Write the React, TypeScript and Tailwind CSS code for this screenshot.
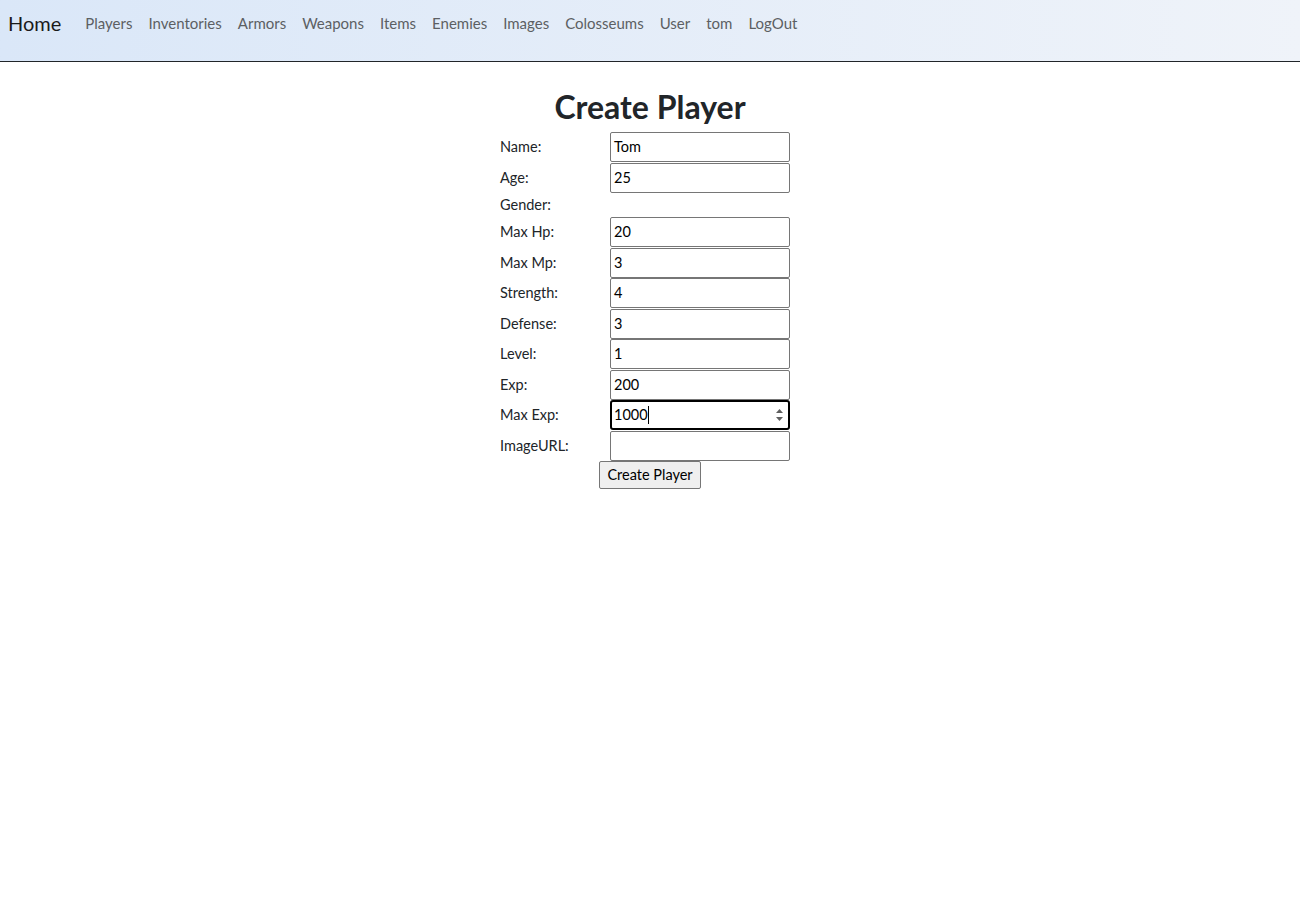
import React from "react";

const navItems = ["Players","Inventories","Armors","Weapons","Items","Enemies","Images","Colosseums","User","tom","LogOut"];

const rows: { label: string; value?: string; kind: "input" | "none" | "focus" }[] = [
  { label: "Name:", value: "Tom", kind: "input" },
  { label: "Age:", value: "25", kind: "input" },
  { label: "Gender:", kind: "none" },
  { label: "Max Hp:", value: "20", kind: "input" },
  { label: "Max Mp:", value: "3", kind: "input" },
  { label: "Strength:", value: "4", kind: "input" },
  { label: "Defense:", value: "3", kind: "input" },
  { label: "Level:", value: "1", kind: "input" },
  { label: "Exp:", value: "200", kind: "input" },
  { label: "Max Exp:", value: "1000", kind: "focus" },
  { label: "ImageURL:", value: "", kind: "input" },
];

export default function App() {
  const font = { fontFamily: '"Lato", "Noto Sans", sans-serif' };
  return (
    <div className="min-h-[920px] bg-white text-[#212529]" style={font}>
      <nav className="h-[62px] border-b border-[#212529] bg-gradient-to-r from-[#dae7f8] to-[#eff3f9] flex items-start pl-[8px] pt-[9px]">
        <span className="text-[20px] leading-[28px] text-[#1a1a1a] mr-[16px]">Home</span>
        <div className="flex">
          {navItems.map((n) => (
            <span key={n} className="px-[8px] text-[15px] leading-[28px] text-[#5c5f63]">{n}</span>
          ))}
        </div>
      </nav>
      <div className="flex flex-col items-center">
        <h1 className="text-[32px] font-bold leading-[38px] mt-[26px] text-[#212529]">Create Player</h1>
        <div className="flex flex-col mt-[6px] ml-[-10px]">
          {rows.map((r) => (
            <div key={r.label} className={"flex items-center " + (r.kind === "none" ? "h-[24px]" : "h-[30.5px]")}>
              <div className="w-[110px] text-[14.5px] text-[#212529]">{r.label}</div>
              {r.kind === "input" && (
                <div className="w-[180px] h-[30px] border border-[#767676] rounded-[2px] bg-white flex items-center px-[3px] text-[14.5px] text-black">
                  {r.value}
                </div>
              )}
              {r.kind === "focus" && (
                <div className="w-[180px] h-[30px] border-2 border-black rounded-[3px] bg-white flex items-center pl-[2px] pr-[4px] text-[14.5px] text-black">
                  <span>{r.value}</span>
                  <span className="inline-block w-px h-[18px] bg-black"></span>
                  <div className="flex-1"></div>
                  <svg width="9" height="16" viewBox="0 0 9 16">
                    <path d="M1 6 L4.5 2 L8 6 Z" fill="#5f5f5f" />
                    <path d="M1 10 L4.5 14 L8 10 Z" fill="#5f5f5f" />
                  </svg>
                </div>
              )}
            </div>
          ))}
        </div>
        <button className="mt-0 h-[28px] px-[7px] border border-[#767676] bg-[#efefef] rounded-[2px] text-[14.5px] text-black leading-none">
          Create Player
        </button>
      </div>
    </div>
  );
}
